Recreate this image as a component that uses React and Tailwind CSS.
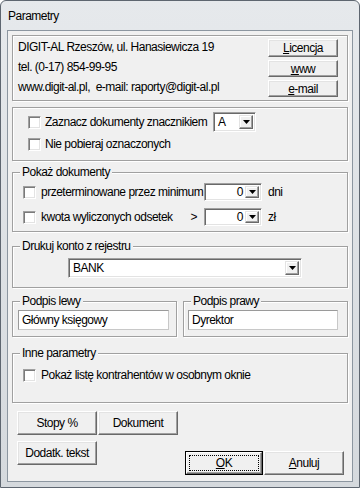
import React from 'react';

// Strzałka listy rozwijanej
const Arrow = () => (
  <svg width="7" height="4" viewBox="0 0 7 4">
    <path d="M0 0h7L3.5 4z" fill="#000" />
  </svg>
);

const Check = () => (
  <span className="w-[13px] h-[13px] shrink-0 bg-white border border-t-[#a0a0a0] border-l-[#a0a0a0] border-r-white border-b-white shadow-[inset_1px_1px_0_#7a7a7a,inset_-1px_-1px_0_#e3e3e3]" />
);

const Btn = ({ children, className = '' }) => (
  <button className={`flex items-center justify-center bg-[#f0f0f0] border border-t-white border-l-white border-r-[#696969] border-b-[#696969] shadow-[inset_-1px_-1px_0_#a0a0a0,inset_1px_1px_0_#e3e3e3] ${className}`}>
    {children}
  </button>
);

const Combo = ({ value, className = '', right = false }) => (
  <div className={`flex bg-white border border-t-[#a0a0a0] border-l-[#a0a0a0] border-r-white border-b-white shadow-[inset_1px_1px_0_#696969,inset_-1px_-1px_0_#e3e3e3] p-[2px] ${className}`}>
    <span className={`flex-1 flex items-center px-[2px] ${right ? 'justify-end' : ''}`}>{value}</span>
    <span className="w-[14px] flex items-center justify-center bg-[#f0f0f0] border border-t-[#e3e3e3] border-l-[#e3e3e3] border-r-[#696969] border-b-[#696969] shadow-[inset_-1px_-1px_0_#a0a0a0,inset_1px_1px_0_#fff]">
      <Arrow />
    </span>
  </div>
);

const Group = ({ title, className = '', children }) => (
  <fieldset className={`border border-[#a0a0a0] shadow-[inset_1px_1px_0_#fff,1px_1px_0_#fff] min-w-0 ${className}`}>
    <legend className="ml-[7px] px-[2px] leading-[14px] bg-[#f0f0f0]">{title}</legend>
    {children}
  </fieldset>
);

const Input = ({ value, className = '' }) => (
  <div className={`h-[20px] flex items-center px-[3px] bg-white border border-t-[#9a9a9a] border-l-[#9a9a9a] border-r-[#c8c8c8] border-b-[#c8c8c8] ${className}`}>
    {value}
  </div>
);

export default function App() {
  return (
    <div className="w-[360px] h-[488px] flex flex-col bg-gradient-to-b from-[#e6e9ec] to-[#d5d9dd] border border-[#5e6670] rounded-t-[6px] font-['Liberation_Sans',Arial,sans-serif] text-[12px] tracking-[-0.5px] leading-[14px] text-black">
      <div className="h-[29px] flex items-center pl-[7px]">Parametry</div>

      <div className="mx-[6px] h-[452px] border border-[#8c96a0] bg-[#f0f0f0] px-[4px] pt-[4px] flex flex-col">
        {/* Dane firmy */}
        <div className="h-[66px] border border-[#a0a0a0] shadow-[inset_1px_1px_0_#fff,1px_1px_0_#fff] flex justify-between pl-[5px] pr-[9px]">
          <div className="pt-[1px] leading-[20px]">
            <div>DIGIT-AL Rzeszów, ul. Hanasiewicza 19</div>
            <div>tel. (0-17) 854-99-95</div>
            <div>www.digit-al.pl,&nbsp; e-mail: raporty@digit-al.pl</div>
          </div>
          <div className="pt-[3px] flex flex-col gap-[3px]">
            <Btn className="w-[70px] h-[18px]"><span><u>L</u>icencja</span></Btn>
            <Btn className="w-[70px] h-[17px]"><span><u>w</u>ww</span></Btn>
            <Btn className="w-[70px] h-[17px]"><span><u>e</u>-mail</span></Btn>
          </div>
        </div>

        {/* Znaczniki */}
        <div className="mt-[6px] h-[54px] border border-[#a0a0a0] shadow-[inset_1px_1px_0_#fff,1px_1px_0_#fff] pt-[4px] pl-[15px]">
          <div className="h-[20px] flex items-center">
            <div className="w-[185px] flex items-center gap-[4px]">
              <Check />
              <span>Zaznacz dokumenty znacznikiem</span>
            </div>
            <Combo value="A" className="w-[43px] h-[20px]" />
          </div>
          <div className="mt-[5px] h-[14px] flex items-center gap-[4px]">
            <Check />
            <span>Nie pobieraj oznaczonych</span>
          </div>
        </div>

        <Group title="Pokaż dokumenty" className="mt-[4px]">
          <div className="pt-[4px] pb-[5px] pl-[10px]">
            <div className="h-[18px] flex items-center">
              <div className="w-[181px] flex items-center gap-[5px]">
                <Check />
                <span>przeterminowane przez minimum</span>
              </div>
              <Combo value="0" right className="w-[58px] h-[18px]" />
              <span className="ml-[6px]">dni</span>
            </div>
            <div className="mt-[7px] h-[18px] flex items-center">
              <div className="w-[181px] flex items-center gap-[5px]">
                <Check />
                <span>kwota wyliczonych odsetek</span>
                <span className="ml-auto mr-[7px]">&gt;</span>
              </div>
              <Combo value="0" right className="w-[58px] h-[18px]" />
              <span className="ml-[6px]">zł</span>
            </div>
          </div>
        </Group>

        <Group title="Drukuj konto z rejestru" className="mt-[7px]">
          <div className="pt-[5px] pb-[9px] pl-[55px]">
            <Combo value="BANK" className="w-[234px] h-[20px]" />
          </div>
        </Group>

        <div className="mt-[6px] flex gap-[6px]">
          <Group title="Podpis lewy" className="w-[165px]">
            <div className="pt-[2px] pb-[6px] pl-[5px]">
              <Input value="Główny księgowy" className="w-[151px]" />
            </div>
          </Group>
          <Group title="Podpis prawy" className="w-[165px]">
            <div className="pt-[2px] pb-[6px] pl-[4px]">
              <Input value="Dyrektor" className="w-[150px]" />
            </div>
          </Group>
        </div>

        <Group title="Inne parametry" className="mt-[9px]">
          <div className="pt-[8px] pb-[20px] pl-[10px] flex items-center gap-[5px]">
            <Check />
            <span>Pokaż listę kontrahentów w osobnym oknie</span>
          </div>
        </Group>

        <div className="mt-[8px] flex">
          <div className="ml-[5px] flex flex-col gap-[6px]">
            <div className="flex gap-[1px]">
              <Btn className="w-[80px] h-[24px]">Stopy %</Btn>
              <Btn className="w-[80px] h-[24px]">Dokument</Btn>
            </div>
            <Btn className="w-[80px] h-[24px]">Dodatk. tekst</Btn>
          </div>
          <div className="ml-auto mr-[4px] pt-[40px] flex gap-[1px]">
            <button className="w-[78px] h-[24px] p-0 border border-black bg-[#f0f0f0]">
              <div className="h-full border border-t-white border-l-white border-r-[#696969] border-b-[#696969] shadow-[inset_-1px_-1px_0_#a0a0a0] p-[2px]">
                <div className="h-full border border-dotted border-black flex items-center justify-center">
                  <span><u>O</u>K</span>
                </div>
              </div>
            </button>
            <Btn className="w-[80px] h-[24px]"><span><u>A</u>nuluj</span></Btn>
          </div>
        </div>
      </div>
    </div>
  );
}
